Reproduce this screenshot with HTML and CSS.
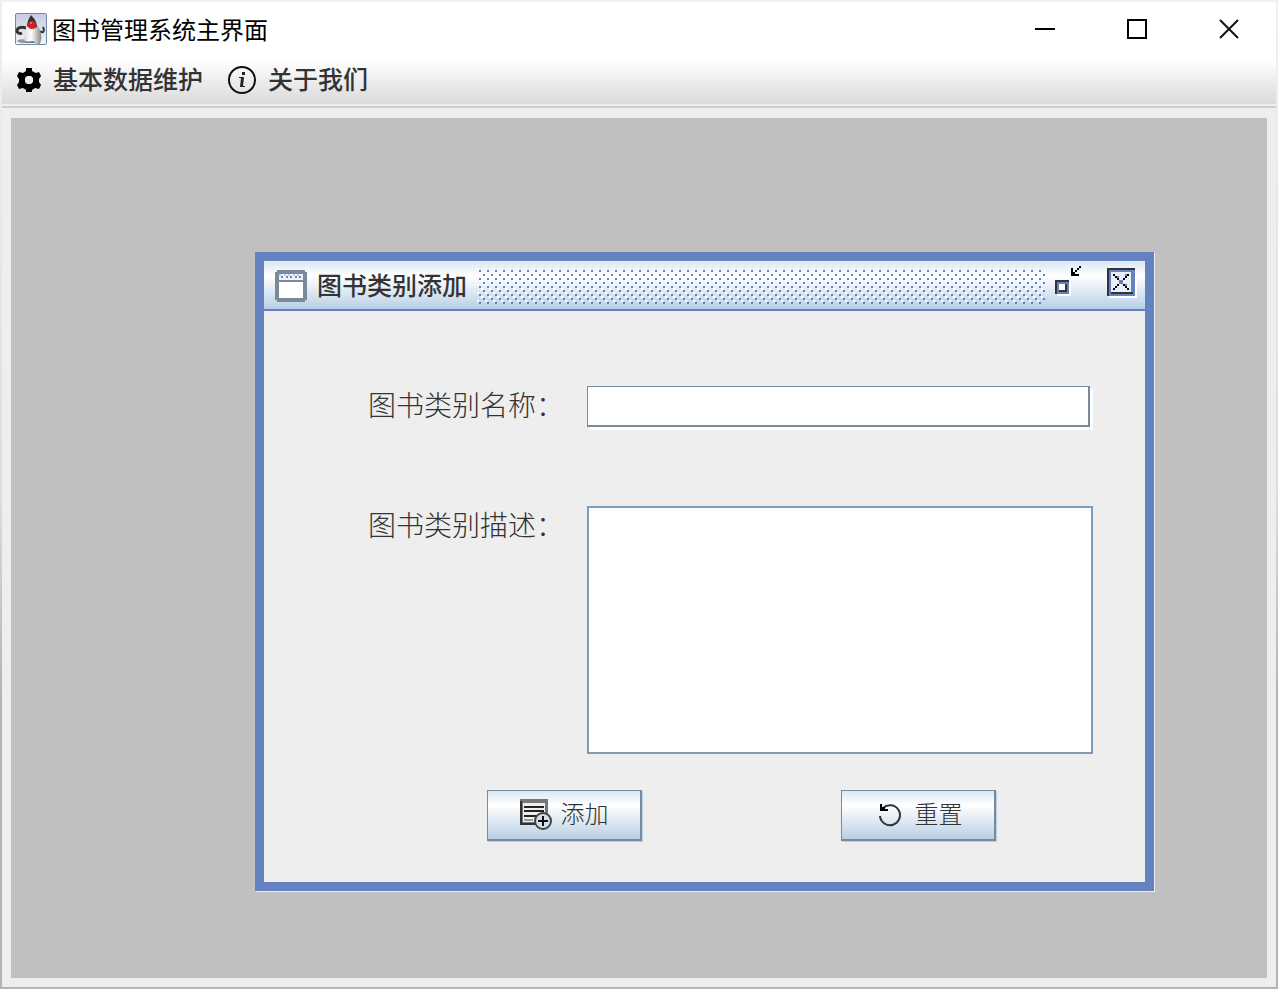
FILE: index.html
```html
<!DOCTYPE html>
<html lang="zh-CN">
<head>
  <meta charset="UTF-8">
  <title>图书管理系统主界面</title>
  <link rel="stylesheet" href="styles.css">
</head>
<body>
  <div class="app">
    <header class="app-title">
      <svg class="duke" width="32" height="32" viewBox="0 0 32 32" aria-hidden="true">
        <defs>
          <linearGradient id="duke-bg" x1="0" y1="0" x2="0" y2="1">
            <stop offset="0" stop-color="#c3cbdd"/>
            <stop offset="1" stop-color="#f4f5fa"/>
          </linearGradient>
          <linearGradient id="duke-body" x1="0" y1="0" x2="1" y2="0">
            <stop offset="0" stop-color="#ddd"/>
            <stop offset="0.4" stop-color="#fff"/>
            <stop offset="1" stop-color="#888"/>
          </linearGradient>
        </defs>
        <rect x="0.5" y="0.5" width="31" height="31" rx="1" fill="url(#duke-bg)" stroke="#6d8ba6"/>
        <ellipse cx="11" cy="28" rx="9" ry="2" fill="#999"/>
        <path d="M11 15C6 13 2 15 2 18c0 2 3 3 5 2" fill="none" stroke="#333" stroke-width="3"/>
        <path d="M25 18c3 3 5 0 3-4" fill="none" stroke="#333" stroke-width="2"/>
        <path d="M12 12C11 19 8 24 10 28c2 2 4 0 7 0s5 3 9 0c1-4 0-11-4-16z" fill="url(#duke-body)"/>
        <path d="M16 2c-2 3-4 7-4 11 3 3 7 3 10 1 0-5-3-9-6-12z" fill="#333"/>
        <path d="M10 28l4 1 3-1 5 2 4-2-2 3-4-1H11z" fill="#777"/>
        <circle cx="17" cy="12" r="4" fill="#d41f24"/>
        <circle cx="16" cy="10" r="1" fill="#ff7b7b"/>
      </svg>
      <h1>图书管理系统主界面</h1>
      <div class="window-controls">
        <button type="button" aria-label="最小化">
          <svg width="20" height="20" viewBox="0 0 20 20"><path d="M0 10h20" stroke="#000" stroke-width="2"/></svg>
        </button>
        <button type="button" aria-label="最大化">
          <svg width="20" height="20" viewBox="0 0 20 20"><path d="M1 1h18v18H1z" fill="none" stroke="#000" stroke-width="2"/></svg>
        </button>
        <button type="button" aria-label="关闭">
          <svg width="20" height="20" viewBox="0 0 20 20"><path d="M1 1l18 18M19 1L1 19" stroke="#111" stroke-width="2"/></svg>
        </button>
      </div>
    </header>

    <nav class="menubar">
      <button type="button">
        <svg width="24" height="24" viewBox="0 0 24 24" aria-hidden="true">
          <path fill-rule="evenodd" d="M9 0h6v3l4 2 3-1 2 4-2 3v3l2 3-2 4-4-1-3 2v2H9v-2l-3-2-4 1-2-4 2-3v-3L0 8l2-4 4 1 3-2zM10 8l-2 2v4l2 2h4l2-2v-4l-2-2z"/>
        </svg>
        <span class="caption">基本数据维护</span>
      </button>
      <button type="button">
        <svg width="28" height="28" viewBox="0 0 28 28" aria-hidden="true">
          <circle cx="14" cy="14" r="13" fill="none" stroke="#111" stroke-width="2"/>
          <path d="M14 6h3v3h-3zM11 11h5l-1 9h2v1h-5l1-9h-2z" fill="#222"/>
        </svg>
        <span class="caption">关于我们</span>
      </button>
    </nav>

    <main class="desktop">
      <section class="frame">
        <div class="frame-title">
          <svg width="32" height="32" viewBox="0 0 32 32" shape-rendering="crispEdges" aria-hidden="true">
            <path d="M2 0h28v2h2v28h-2v2H2v-2H0V2h2z" fill="#7a8a99"/>
            <path d="M4 4h24v6H4z" fill="#eef3fa"/>
            <path d="M4 12h24v16H4z" fill="#fff"/>
            <path d="M6 6h2v2H6zM11 6h2v2h-2zM15 6h2v2h-2zM20 6h2v2h-2zM24 6h2v2h-2z" fill="#6382bf"/>
            <path d="M4 4h2v2H4zM9 4h2v2H9zM13 4h2v2h-2zM18 4h2v2h-2zM22 4h2v2h-2z" fill="#b8cfe5"/>
          </svg>
          <h2 class="caption">图书类别添加</h2>
          <svg class="bumps" height="36" shape-rendering="crispEdges" aria-hidden="true">
            <defs>
              <pattern id="bumps" width="8" height="8" patternUnits="userSpaceOnUse">
                <path d="M0 0h2v2H0zM4 4h2v2H4z" fill="#fff"/>
                <path d="M2 2h2v2H2zM6 6h2v2H6z" fill="#6382bf"/>
              </pattern>
            </defs>
            <rect width="100%" height="36" fill="url(#bumps)"/>
          </svg>
          <div class="frame-controls">
            <button type="button" aria-label="还原">
              <svg width="30" height="32" viewBox="0 0 30 32" shape-rendering="crispEdges">
                <path d="M2 16h14v14H2z" fill="#fff"/>
                <path d="M0 14h14v14H0z" fill="#333"/>
                <path d="M2 16h12v12H2z" fill="#6382bf"/>
                <path d="M4 18h8v8H4z" fill="#333"/>
                <path d="M4 18h6v6H4z" fill="#fff"/>
                <path d="M16 2h2v4h2V4h2V2h2V0h2v2h-2v2h-2v2h-2v2h4v2h-8z" fill="#000"/>
              </svg>
            </button>
            <button type="button" aria-label="关闭窗口">
              <svg width="30" height="30" viewBox="0 0 30 30" shape-rendering="crispEdges">
                <path d="M2 2h28v28H2z" fill="#fff"/>
                <path d="M0 0h28v28H0z" fill="#333"/>
                <path d="M2 2h24v22H4v4H2z" fill="#6382bf"/>
                <path d="M4 26h24v2H4zM26 2h2v26h-2z" fill="#6382bf"/>
                <path d="M4 4h20v20H4z" fill="#e8eff7"/>
                <path d="M12 12h4v4h-4zM10 8h2v2h-2zM18 6h2v2h-2zM8 18h2v2H8zM18 16h2v2h-2z" fill="#6382bf"/>
                <path d="M6 6h2v2H6zM8 8h2v2H8zM10 10h2v2h-2zM16 10h2v2h-2zM18 8h2v2h-2zM20 6h2v2h-2zM10 16h2v2h-2zM8 18h2v2H8zM6 20h2v2H6zM16 16h2v2h-2zM18 18h2v2h-2zM20 20h2v2h-2z" fill="#000"/>
              </svg>
            </button>
          </div>
        </div>

        <form class="category-form">
          <label for="category-name">图书类别名称：</label>
          <input id="category-name" type="text">
          <label for="category-desc">图书类别描述：</label>
          <textarea id="category-desc"></textarea>
          <div class="actions">
            <button type="button">
              <svg width="32" height="32" viewBox="0 0 32 32" aria-hidden="true">
                <path d="M0 0h28v26H0z" fill="#777"/>
                <path d="M0 2h2v24H0zM0 24h18v2H0z" fill="#333"/>
                <path d="M3 4h22v19H3z" fill="#eee"/>
                <path d="M4 7h20v2H4zM4 11h20v2H4zM4 16h13v2H4z" fill="#222"/>
                <path d="M4 20h9v2H4z" fill="#999"/>
                <circle cx="23" cy="22" r="8" fill="#d5dfeb" stroke="#444" stroke-width="2"/>
                <path d="M23 17v10M18 22h10" stroke="#111" stroke-width="2"/>
              </svg>
              <span class="caption">添加</span>
            </button>
            <button type="button">
              <svg width="32" height="26" viewBox="-4 0 32 26" aria-hidden="true">
                <path d="M5 6a10 10 0 1 1-3 8" fill="none" stroke="#333" stroke-width="2"/>
                <path d="M2 2h2v3h3v2h3v2H2z" fill="#000"/>
              </svg>
              <span class="caption">重置</span>
            </button>
          </div>
        </form>
      </section>
    </main>
  </div>
</body>
</html>
```
FILE: styles.css
```css
* { box-sizing: border-box; }
body {
  margin: 0;
  font-family: SimSun, "Noto Sans CJK SC", sans-serif;
  color: #333;
}
h1, h2 {
  margin: 0;
  font-weight: normal;
}
button {
  font-family: inherit;
  color: inherit;
  border: none;
  background: transparent;
  padding: 0;
  cursor: pointer;
}
svg {
  display: block;
  flex-shrink: 0;
}
.caption {
  padding-bottom: 4px;
  line-height: 32px;
}
.app {
  display: flex;
  flex-direction: column;
  min-height: 100vh;
  background: #eee;
  border: 2px solid #b4b4b4;
  border-image: linear-gradient(#f0f0f0, #ddd 50%, #b4b4b4 70%) 2;
}

/* main window */
.app-title {
  display: flex;
  align-items: center;
  height: 56px;
  padding: 0 1px 2px 13px;
  background: #fff;
}
.app-title h1 {
  margin-left: 5px;
  font-family: "Noto Sans CJK SC", sans-serif;
  font-size: 24px;
  line-height: 32px;
  color: #000;
}
.window-controls {
  display: flex;
  margin-left: auto;
}
.window-controls button {
  display: flex;
  align-items: center;
  justify-content: center;
  width: 92px;
  height: 54px;
}
.menubar {
  display: flex;
  gap: 25px;
  height: 50px;
  padding: 0 15px;
  background: linear-gradient(#fff, #fff 2px, #dadada 46px, #eee 46px, #eee 48px, #ccc 48px);
}
.menubar button {
  display: flex;
  align-items: center;
  gap: 12px;
  height: 44px;
  font-size: 25px;
  font-weight: 500;
}
.desktop {
  position: relative;
  flex: 1;
  margin: 10px 9px 9px;
  background: #c0c0c0;
}

/* internal frame */
.frame {
  position: absolute;
  left: 244px;
  top: 134px;
  width: 899px;
  border: 9px solid #6382bf;
  background: #eee;
  box-shadow: 1px 1px 0 #eee;
}
.frame-title {
  display: flex;
  align-items: center;
  gap: 10px;
  height: 50px;
  padding: 0 8px 0 11px;
  border-top: 1px solid #eee;
  border-bottom: 2px solid #6382bf;
  background: linear-gradient(#dde8f3, #fff 30%, #b8cfe5);
}
.frame-title h2 {
  font-size: 25px;
  font-weight: 500;
}
.bumps {
  flex: 1;
  min-width: 0;
}
.frame-controls {
  display: flex;
  align-items: flex-end;
  align-self: flex-start;
  gap: 22px;
  padding-top: 4px;
}
.category-form {
  display: grid;
  grid-template-columns: 178px 1fr;
  column-gap: 41px;
  row-gap: 79px;
  align-items: start;
  padding: 75px 52px 41px 104px;
}
.category-form label {
  font-size: 28px;
  font-weight: 300;
  line-height: 36px;
  white-space: nowrap;
}
.category-form input,
.category-form textarea {
  width: 100%;
  margin: 0;
  padding: 4px 8px;
  background: #fff;
  font-family: inherit;
  font-size: 28px;
}
.category-form input {
  width: calc(100% - 3px);
  height: 41px;
  border: 1px solid #7a8a99;
  border-right: 2px solid #7a8a99;
  border-bottom: 2px solid #7a8a99;
  box-shadow: 3px 3px 0 #fff;
}
.category-form textarea {
  display: block;
  height: 248px;
  border: 2px solid #7f9db9;
  resize: none;
}
.actions {
  grid-column: 1 / -1;
  display: flex;
  gap: 199px;
  margin-top: -43px;
  padding-left: 119px;
}
.actions button {
  display: flex;
  align-items: center;
  justify-content: center;
  gap: 9px;
  width: 155px;
  height: 51px;
  border: 1px solid #7a8a99;
  border-right-width: 2px;
  border-bottom-width: 2px;
  background: linear-gradient(#dde8f3, #fff 30%, #b8cfe5);
  box-shadow: 1px 1px 0 #b8cfe5;
  font-size: 24px;
  font-weight: 300;
}
```
